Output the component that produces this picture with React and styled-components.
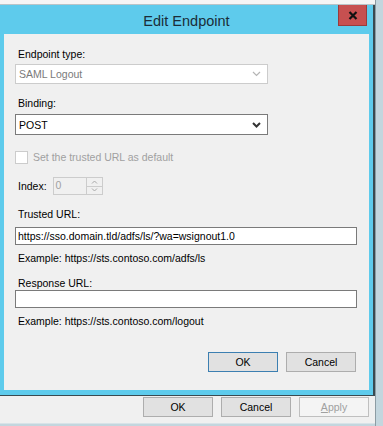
import React from "react";
import styled, { createGlobalStyle } from "styled-components";

const GlobalStyle = createGlobalStyle`
  html, body { margin: 0; padding: 0; }
  body {
    font-family: "Liberation Sans", Arial, sans-serif;
    font-size: 10.5px;
    color: #000;
    background: #f0f0f0;
  }
`;

const Screen = styled.div`
  width: 383px;
  height: 426px;
  display: flex;
  overflow: hidden;
  background: #f0f0f0;
`;

const Desktop = styled.div`
  width: 375px;
  display: flex;
  flex-direction: column;
`;

const TopStrip = styled.div`
  height: 4px;
  background: #f5f5f5;
  border-bottom: 1px solid #b9c4c8;
`;

const RightStrip = styled.div`
  width: 8px;
  background: #c3d6de;
  border-left: 1px solid #8d9ca3;
`;

const Dialog = styled.div`
  width: 373px;
  height: 385px;
  background: #5ecbec;
  border-right: 2px solid #3a4a50;
  border-bottom: 1px solid #3a4a50;
  display: flex;
  flex-direction: column;
  padding: 0 0 5px 0;
`;

const TitleBar = styled.div`
  height: 29px;
  display: grid;
  grid-template-columns: 1fr auto 1fr;
  align-items: center;
`;

const Title = styled.div`
  grid-column: 2;
  font-size: 14.5px;
  color: #1b2d38;
  padding-top: 2px;
`;

const CloseButton = styled.div`
  grid-column: 3;
  justify-self: end;
  align-self: start;
  margin-right: 6px;
  width: 27px;
  height: 20px;
  background: #c75050;
  border: 1px solid #9b3b3b;
  border-top: none;
  display: flex;
  align-items: center;
  justify-content: center;
`;

const Client = styled.div`
  flex: 1;
  margin: 0 4px 0 4px;
  background: #f0f0f0;
  padding: 0 12px 0 11px;
  display: flex;
  flex-direction: column;
`;

const Label = styled.div`
  margin-top: ${(p) => p.$mt}px;
  height: 16px;
  line-height: 18px;
  padding-left: 3px;
  color: ${(p) => (p.$disabled ? "#a0a0a0" : "#000")};
  white-space: nowrap;
`;

const SelectBox = styled.div`
  margin-top: ${(p) => p.$mt}px;
  width: 253px;
  height: ${(p) => p.$h}px;
  box-sizing: border-box;
  background: #fff;
  border: 1px solid ${(p) => (p.$disabled ? "#cccccc" : "#7a7a7a")};
  display: flex;
  align-items: center;
  justify-content: space-between;
  padding: 0 6px 0 3px;
  color: ${(p) => (p.$disabled ? "#7a7a7a" : "#000")};
`;

const TextBox = styled.div`
  margin-top: ${(p) => p.$mt}px;
  width: 342px;
  height: 18px;
  box-sizing: border-box;
  background: #fff;
  border: 1px solid #7a7a7a;
  display: flex;
  align-items: center;
  padding-left: 2px;
  white-space: nowrap;
  overflow: hidden;
`;

const CheckRow = styled.div`
  margin-top: ${(p) => p.$mt}px;
  height: 16px;
  display: flex;
  align-items: center;
  gap: 5px;
  color: #a0a0a0;
`;

const CheckBox = styled.div`
  width: 13px;
  height: 13px;
  box-sizing: border-box;
  background: #fff;
  border: 1px solid #cccccc;
`;

const IndexRow = styled.div`
  margin-top: ${(p) => p.$mt}px;
  height: 18px;
  display: flex;
  align-items: center;
  gap: 6px;
  padding-left: 3px;
`;

const Spinner = styled.div`
  width: 50px;
  height: 18px;
  box-sizing: border-box;
  border: 1px solid #cccccc;
  background: #f0f0f0;
  display: flex;
`;

const SpinValue = styled.div`
  flex: 1;
  padding-left: 2px;
  line-height: 15px;
  color: #a0a0a0;
`;

const SpinButtons = styled.div`
  width: 15px;
  display: flex;
  flex-direction: column;
  border-left: 1px solid #cccccc;
`;

const SpinHalf = styled.div`
  flex: 1;
  display: flex;
  align-items: center;
  justify-content: center;
  & + & { border-top: 1px solid #cccccc; }
`;

const ButtonRow = styled.div`
  margin-top: ${(p) => p.$mt}px;
  display: flex;
  justify-content: flex-end;
  gap: 8px;
  padding-right: 1px;
`;

const Button = styled.div`
  width: 70px;
  height: 20px;
  box-sizing: border-box;
  background: ${(p) => (p.$disabled ? "#f4f4f4" : "#e1e1e1")};
  border: 1px solid ${(p) => (p.$default ? "#3c7fb1" : p.$disabled ? "#bfbfbf" : "#adadad")};
  color: ${(p) => (p.$disabled ? "#a0a0a0" : "#000")};
  display: flex;
  align-items: center;
  justify-content: center;
  line-height: 16px;
`;

const ParentButtons = styled.div`
  height: 26px;
  padding-top: 1px;
  padding-right: 6px;
  display: flex;
  justify-content: flex-end;
  gap: 8px;
  background: #f0f0f0;
`;

const BottomStrip = styled.div`
  flex: 1;
  background: #c3d6de;
  border-top: 1px solid #d8e3e8;
`;

const Chevron = ({ color, width = 1.5 }) => (
  <svg width="9" height="6" viewBox="0 0 9 6">
    <polyline points="1,1 4.5,4.5 8,1" fill="none" stroke={color} strokeWidth={width} />
  </svg>
);

const SmallChevron = ({ up }) => (
  <svg width="7" height="4" viewBox="0 0 7 4">
    <polyline
      points={up ? "1,3.5 3.5,1 6,3.5" : "1,0.5 3.5,3 6,0.5"}
      fill="none"
      stroke="#a8a8a8"
      strokeWidth="1"
    />
  </svg>
);

export default function App() {
  return (
    <>
      <GlobalStyle />
      <Screen>
        <Desktop>
          <TopStrip />
          <Dialog>
            <TitleBar>
              <Title>Edit Endpoint</Title>
              <CloseButton>
                <svg width="10" height="9" viewBox="0 0 10 9">
                  <path d="M1.5 1 L8.5 8 M8.5 1 L1.5 8" stroke="#111" strokeWidth="2.2" />
                </svg>
              </CloseButton>
            </TitleBar>
            <Client>
              <Label $mt={11}>Endpoint type:</Label>
              <SelectBox $mt={3} $h={20} $disabled>
                <span>SAML Logout</span>
                <Chevron color="#b5b5b5" width={1.2} />
              </SelectBox>
              <Label $mt={10}>Binding:</Label>
              <SelectBox $mt={4} $h={21}>
                <span>POST</span>
                <Chevron color="#333" width={2} />
              </SelectBox>
              <CheckRow $mt={14}>
                <CheckBox />
                <span>Set the trusted URL as default</span>
              </CheckRow>
              <IndexRow $mt={12}>
                <span>Index:</span>
                <Spinner>
                  <SpinValue>0</SpinValue>
                  <SpinButtons>
                    <SpinHalf><SmallChevron up /></SpinHalf>
                    <SpinHalf><SmallChevron /></SpinHalf>
                  </SpinButtons>
                </Spinner>
              </IndexRow>
              <Label $mt={10}>Trusted URL:</Label>
              <TextBox $mt={6}>https://sso.domain.tld/adfs/ls/?wa=wsignout1.0</TextBox>
              <Label $mt={4}>Example: https://sts.contoso.com/adfs/ls</Label>
              <Label $mt={9}>Response URL:</Label>
              <TextBox $mt={0} />
              <Label $mt={4}>Example: https://sts.contoso.com/logout</Label>
              <ButtonRow $mt={24}>
                <Button $default>OK</Button>
                <Button>Cancel</Button>
              </ButtonRow>
            </Client>
          </Dialog>
          <ParentButtons>
            <Button>OK</Button>
            <Button>Cancel</Button>
            <Button $disabled><span><u>A</u>pply</span></Button>
          </ParentButtons>
          <BottomStrip />
        </Desktop>
        <RightStrip />
      </Screen>
    </>
  );
}
